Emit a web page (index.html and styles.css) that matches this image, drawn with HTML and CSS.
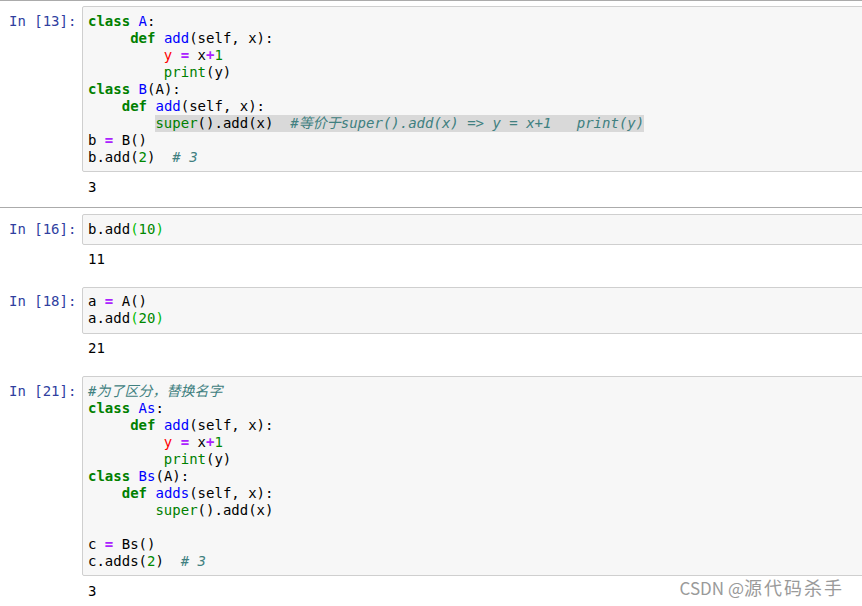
FILE: index.html
```html
<!DOCTYPE html>
<html lang="zh">
<head>
<meta charset="utf-8">
<title>Notebook</title>
<link rel="stylesheet" href="styles.css">
</head>
<body>
<div class="notebook">
  <div class="cell selected">
    <div class="input">
      <div class="prompt">In&nbsp;[13]:</div>
      <div class="input-area"><pre class="code"><span class="kw">class</span> <span class="def">A</span>:
     <span class="kw">def</span> <span class="def">add</span>(self, x):
         <span class="err">y</span> <span class="op">=</span> x<span class="op">+</span><span class="num">1</span>
         <span class="bi">print</span>(y)
<span class="kw">class</span> <span class="def">B</span>(A):
    <span class="kw">def</span> <span class="def">add</span>(self, x):
        <span class="sel"><span class="bi">super</span>().add(x)  <span class="cm">#等价于super().add(x) =&gt; y = x+1   print(y)</span></span>
b <span class="op">=</span> B()
b.add(<span class="num">2</span>)  <span class="cm"># 3</span></pre></div>
    </div>
    <div class="output"><pre class="out">3</pre></div>
  </div>

  <div class="cell">
    <div class="input">
      <div class="prompt">In&nbsp;[16]:</div>
      <div class="input-area"><pre class="code">b.add<span class="mb">(</span><span class="num">10</span><span class="mb">)</span></pre></div>
    </div>
    <div class="output"><pre class="out">11</pre></div>
  </div>

  <div class="cell">
    <div class="input">
      <div class="prompt">In&nbsp;[18]:</div>
      <div class="input-area"><pre class="code">a <span class="op">=</span> A()
a.add<span class="mb">(</span><span class="num">20</span><span class="mb">)</span></pre></div>
    </div>
    <div class="output"><pre class="out">21</pre></div>
  </div>

  <div class="cell">
    <div class="input">
      <div class="prompt">In&nbsp;[21]:</div>
      <div class="input-area"><pre class="code"><span class="cm">#为了区分，替换名字</span>
<span class="kw">class</span> <span class="def">As</span>:
     <span class="kw">def</span> <span class="def">add</span>(self, x):
         <span class="err">y</span> <span class="op">=</span> x<span class="op">+</span><span class="num">1</span>
         <span class="bi">print</span>(y)
<span class="kw">class</span> <span class="def">Bs</span>(A):
    <span class="kw">def</span> <span class="def">adds</span>(self, x):
        <span class="bi">super</span>().add(x)

c <span class="op">=</span> Bs()
c.adds(<span class="num">2</span>)  <span class="cm"># 3</span></pre></div>
    </div>
    <div class="output"><pre class="out">3</pre></div>
  </div>
</div>
<div class="watermark">CSDN @<span class="wm-cjk">源代码杀手</span></div>
</body>
</html>
```

FILE: styles.css
```css
html, body {
  margin: 0;
  padding: 0;
  background: #fff;
  overflow: hidden;
}

body {
  width: 862px;
  height: 606px;
  position: relative;
  font-family: "DejaVu Sans Mono", "Noto Sans CJK SC", monospace;
  font-size: 14px;
  color: #000;
}

.notebook {
  width: 900px;
}

.cell {
  border-top: 1px solid transparent;
  border-bottom: 1px solid transparent;
  padding: 5px 0 5px 0;
}

.cell.selected {
  border-top-color: #ababab;
  border-bottom-color: #ababab;
}

.input {
  display: flex;
  align-items: flex-start;
}

.prompt {
  width: 82px;
  box-sizing: border-box;
  flex: none;
  padding: 6.6px 5.6px 0 0;
  text-align: right;
  color: #303f9f;
  line-height: 17px;
  white-space: nowrap;
}

.input-area {
  flex: 1;
  border: 1px solid #cfcfcf;
  border-radius: 2px;
  background: #f7f7f7;
}

.code {
  margin: 0;
  padding: 5.6px 5px;
  font-family: inherit;
  font-size: 14px;
  line-height: 17px;
}

.output {
  margin-left: 82px;
  padding: 6.4px 6px 6.8px;
}

.out {
  margin: 0;
  font-family: inherit;
  font-size: 14px;
  line-height: 17px;
}

.kw { color: #008000; font-weight: bold; }
.def { color: #0000ff; }
.op { color: #aa22ff; font-weight: bold; }
.num { color: #008800; }
.bi { color: #008000; }
.cm { color: #408080; font-style: italic; }
.err { color: #ff0000; }
.mb { color: #00bb00; }
.sel {
  background: #d9d9d9;
  display: inline-block;
  line-height: 17px;
  vertical-align: top;
}

.watermark {
  position: absolute;
  right: 18px;
  top: 576px;
  font-family: "Noto Sans CJK SC", "Noto Sans", sans-serif;
  font-size: 17px;
  line-height: 22px;
  color: #9a9a9a;
  text-shadow: 0 0 1px #fff;
  white-space: nowrap;
}

.wm-cjk {
  font-size: 18px;
  letter-spacing: 2px;
}
```
